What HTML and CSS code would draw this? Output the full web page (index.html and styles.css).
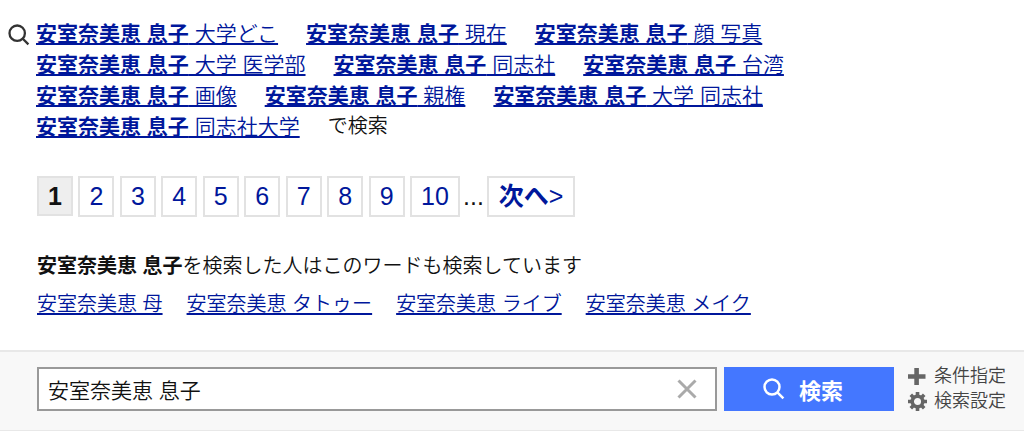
FILE: index.html
```html
<!DOCTYPE html>
<html lang="ja">
<head>
<meta charset="utf-8">
<meta name="viewport" content="width=device-width, initial-scale=1">
<title>安室奈美恵 息子 - 検索</title>
<link rel="stylesheet" href="styles.css">
</head>
<body>
<main class="results">
  <section class="assist">
    <svg class="assist-icon" viewBox="0 0 22 22" aria-hidden="true"><circle cx="9.2" cy="9.2" r="7.7"/><path d="M14.8 14.8L20.4 20.4"/></svg>
    <div class="assist-words">
      <a href="#"><b>安室奈美恵 息子</b> 大学どこ</a>
      <a href="#"><b>安室奈美恵 息子</b> 現在</a>
      <a href="#"><b>安室奈美恵 息子</b> 顔 写真</a>
      <a href="#"><b>安室奈美恵 息子</b> 大学 医学部</a>
      <a href="#"><b>安室奈美恵 息子</b> 同志社</a>
      <a href="#"><b>安室奈美恵 息子</b> 台湾</a>
      <a href="#"><b>安室奈美恵 息子</b> 画像</a>
      <a href="#"><b>安室奈美恵 息子</b> 親権</a>
      <a href="#"><b>安室奈美恵 息子</b> 大学 同志社</a>
      <a href="#"><b>安室奈美恵 息子</b> 同志社大学</a>
      <span class="assist-tail">で検索</span>
    </div>
  </section>

  <nav class="pager" aria-label="ページ">
    <div class="pager-numbers">
      <strong class="page current">1</strong>
      <a class="page" href="#">2</a>
      <a class="page" href="#">3</a>
      <a class="page" href="#">4</a>
      <a class="page" href="#">5</a>
      <a class="page" href="#">6</a>
      <a class="page" href="#">7</a>
      <a class="page" href="#">8</a>
      <a class="page" href="#">9</a>
      <a class="page" href="#">10</a>
    </div>
    <span class="dots">...</span>
    <a class="page next" href="#"><b>次へ</b>&gt;</a>
  </nav>

  <section class="related">
    <h2 class="related-title"><b>安室奈美恵 息子</b>を検索した人はこのワードも検索しています</h2>
    <div class="related-words">
      <a href="#">安室奈美恵 母</a>
      <a href="#">安室奈美恵 タトゥー</a>
      <a href="#">安室奈美恵 ライブ</a>
      <a href="#">安室奈美恵 メイク</a>
    </div>
  </section>
</main>

<form class="searchbar">
  <div class="field">
    <input class="field-input" type="text" value="安室奈美恵 息子" aria-label="検索キーワード">
    <button class="field-clear" type="reset" aria-label="クリア"><svg viewBox="0 0 20 20" aria-hidden="true"><path d="M1.5 1.5L18.5 18.5M18.5 1.5L1.5 18.5"/></svg></button>
  </div>
  <button class="submit" type="submit"><svg viewBox="0 0 22 22" aria-hidden="true"><circle cx="9" cy="9" r="7.5"/><path d="M14.4 14.4L20.4 20.4"/></svg>検索</button>
  <div class="options">
    <a href="#"><svg viewBox="0 0 19 19" aria-hidden="true"><path d="M6.300 1h4.600v6.200h6.600v4.600h-6.600V18H6.300v-6.200H0V7.200h6.300z"/></svg>条件指定</a>
    <a href="#"><svg viewBox="0 0 19 19" aria-hidden="true"><circle class="gear-ring" cx="9.500" cy="9.500" r="5.300"/><path class="gear-teeth" d="M9.500 0v3.500M9.500 15.500V19M0 9.500h3.500M15.500 9.500H19M2.800 2.800l2.400 2.400M13.800 13.800l2.400 2.400M16.200 2.800l-2.400 2.400M5.200 13.800l-2.400 2.400"/></svg>検索設定</a>
  </div>
</form>
</body>
</html>
```
FILE: styles.css
```css
* {
  box-sizing: border-box;
}

body {
  margin: 0;
  background: #fff;
  color: #111;
  font-family: "Liberation Sans", "Noto Sans CJK JP", sans-serif;
  font-size: 20px;
}

a {
  color: #00179b;
}

b {
  font-weight: 700;
}

.results {
  padding: 18px 32px 26px 36px;
}

.assist {
  display: flex;
  margin-left: -28px;
}

.assist-icon {
  flex: none;
  width: 22px;
  height: 22px;
  margin: 6px 6px 0 0;
  fill: none;
  stroke: #333;
  stroke-width: 2.3;
}

.assist-words {
  display: flex;
  flex-wrap: wrap;
  column-gap: 28px;
  font-size: 21px;
  font-weight: 350;
  line-height: 31px;
}

.assist-words a,
.related-words a {
  text-decoration-thickness: 2px;
  text-decoration-skip-ink: none;
  text-underline-offset: 2px;
}

.assist-tail {
  font-size: 20px;
}

.pager {
  display: flex;
  align-items: flex-start;
  margin-top: 34px;
  padding-left: 1px;
  font-size: 25px;
  line-height: 37px;
}

.pager-numbers {
  display: flex;
  justify-content: space-between;
  align-items: flex-start;
  width: 423px;
}

.page {
  padding: 0 9px;
  border: 2px solid #e2e2e2;
  text-decoration: none;
}

.page.current {
  background: #eee;
  line-height: 36px;
}

.dots {
  margin: 0 3px;
  line-height: 41px;
}

.next {
  padding: 0 10px;
}

.related {
  margin-top: 31px;
  padding-left: 1px;
  font-weight: 350;
}

.related-title {
  margin: 0;
  font-size: 20px;
  font-weight: 350;
  line-height: 37px;
}

.related-words {
  display: flex;
  flex-wrap: wrap;
  column-gap: 24px;
  line-height: 39px;
}

.searchbar {
  display: flex;
  align-items: center;
  padding: 12px 18px 16px 37px;
  border-top: 2px solid #e8e8e8;
  border-bottom: 2px solid #e8e8e8;
  background: #f8f8f8;
}

.field {
  display: flex;
  align-items: center;
  flex: 1;
  min-width: 0;
  height: 44px;
  margin-right: 7px;
  border: 2px solid #999;
  background: #fff;
}

.field-input {
  flex: 1;
  min-width: 0;
  padding: 0 0 0 9px;
  border: 0;
  outline: 0;
  background: none;
  color: #111;
  font: inherit;
  font-size: 21px;
  font-weight: 350;
}

.field-clear {
  display: flex;
  padding: 0 18px;
  border: 0;
  background: none;
}

.field-clear svg {
  width: 20px;
  height: 20px;
  stroke: #aaa;
  stroke-width: 3;
}

.submit {
  display: flex;
  align-items: center;
  justify-content: center;
  gap: 14px;
  width: 170px;
  height: 44px;
  padding: 0 12px 0 0;
  border: 0;
  background: #4477ff;
  color: #fff;
  font: inherit;
  font-size: 22px;
  font-weight: 700;
}

.submit svg {
  width: 22px;
  height: 22px;
  fill: none;
  stroke: #fff;
  stroke-width: 2.5;
}

.options {
  margin-left: 14px;
  font-size: 18px;
  font-weight: 350;
  line-height: 25px;
}

.options a {
  display: flex;
  align-items: center;
  gap: 7px;
  color: #444;
  text-decoration: none;
}

.options svg {
  width: 19px;
  height: 19px;
  fill: #666;
}

.options .gear-ring {
  fill: none;
  stroke: #666;
  stroke-width: 3.5;
}

.options .gear-teeth {
  stroke: #666;
  stroke-width: 3.6;
}
```
